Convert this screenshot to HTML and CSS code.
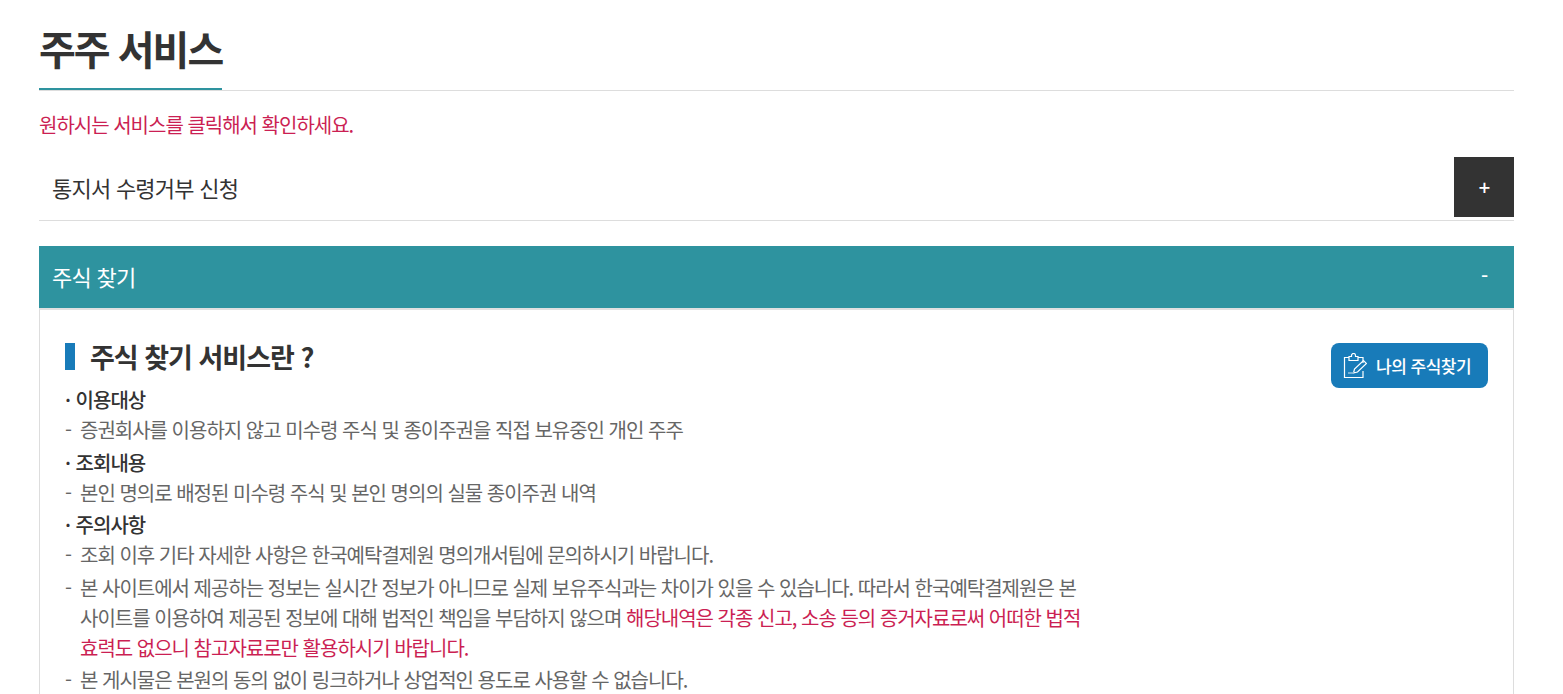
FILE: index.html
```html
<!DOCTYPE html>
<html lang="ko">
<head>
<meta charset="utf-8">
<title>주주 서비스</title>
<link rel="stylesheet" href="styles.css">
</head>
<body>
<main class="page">
  <header class="title-wrap"><h1 class="title">주주 서비스</h1></header>
  <p class="notice">원하시는 서비스를 클릭해서 확인하세요.</p>
  <section class="acc-closed">
    <h2 class="acc-closed-title">통지서 수령거부 신청</h2>
    <span class="acc-plus">+</span>
  </section>
  <section class="acc-open">
    <div class="acc-open-head"><h2 class="acc-open-title">주식 찾기</h2><span class="acc-minus">-</span></div>
    <div class="acc-body">
      <div class="content">
        <h3 class="sub-title">주식 찾기 서비스란 ?</h3>
        <p class="label">· 이용대상</p>
        <p class="item">증권회사를 이용하지 않고 미수령 주식 및 종이주권을 직접 보유중인 개인 주주</p>
        <p class="label">· 조회내용</p>
        <p class="item">본인 명의로 배정된 미수령 주식 및 본인 명의의 실물 종이주권 내역</p>
        <p class="label">· 주의사항</p>
        <p class="item">조회 이후 기타 자세한 사항은 한국예탁결제원 명의개서팀에 문의하시기 바랍니다.</p>
        <p class="item">본 사이트에서 제공하는 정보는 실시간 정보가 아니므로 실제 보유주식과는 차이가 있을 수 있습니다. 따라서 한국예탁결제원은 본 사이트를 이용하여 제공된 정보에 대해 법적인 책임을 부담하지 않으며 <span class="warn">해당내역은 각종 신고, 소송 등의 증거자료로써 어떠한 법적 효력도 없으니 참고자료로만 활용하시기 바랍니다.</span></p>
        <p class="item">본 게시물은 본원의 동의 없이 링크하거나 상업적인 용도로 사용할 수 없습니다.</p>
      </div>
      <a class="find-btn" href="#">
        <svg class="find-icon" viewBox="0 0 24 26" width="24" height="26" fill="none" stroke="#fff" stroke-width="1.2">
          <path d="M6 4.500H1.500V24.500H20V18"/>
          <path d="M15 4.500h5V10"/>
          <path d="M6 7.500V3.500h2.500V2.500a2 2 0 0 1 4 0V3.500H15v4z"/>
          <path d="M10.500 20l1-4L20.500 7.500l3 3-9 8.500z"/>
          <path d="M5 20h6" stroke="#8fbfdc" stroke-width="1.600"/>
        </svg>
        <span>나의 주식찾기</span>
      </a>
    </div>
  </section>
</main>
</body>
</html>
```

FILE: styles.css
```css
html, body { margin: 0; padding: 0; height: 694px; overflow: hidden; background: #fff; }
body { font-family: "Noto Sans CJK KR", "Noto Sans", sans-serif; color: #333; }
h1, h2, h3, p { margin: 0; }
.page { padding: 0 49px 0 39px; }
.title-wrap { border-bottom: 1px solid #ddd; height: 90px; display: flex; }
.title { font-size: 40px; line-height: 50px; padding-top: 23px; height: 90px; box-sizing: border-box; font-weight: 700; letter-spacing: -2px; color: #333; border-bottom: 2px solid #2e939f; margin-bottom: -1px; }
.notice { margin-top: 20px; font-size: 20px; line-height: 28px; letter-spacing: -1px; color: #cb1f53; }
.acc-closed { margin-top: 18px; height: 60px; border-bottom: 1px solid #ddd; display: flex; justify-content: space-between; padding-bottom: 3px; padding-left: 13px; }
.acc-closed-title { font-size: 22px; line-height: 60px; font-weight: 400; letter-spacing: -0.75px; color: #333; }
.acc-plus { width: 60px; height: 60px; padding-left: 1px; box-sizing: border-box; background: #333; color: #fff; font-size: 20px; font-weight: 500; line-height: 60px; text-align: center; }
.acc-open { margin-top: 25px; }
.acc-open-head { height: 62px; background: #2e939f; color: #fff; display: flex; justify-content: space-between; padding-left: 13px; border-bottom: 2px solid #e0e0e0; }
.acc-open-title { font-size: 22px; line-height: 60px; font-weight: 400; letter-spacing: -0.75px; }
.acc-minus { width: 60px; padding-left: 1px; box-sizing: border-box; text-align: center; font-size: 20px; font-weight: 500; line-height: 60px; }
.acc-body { border: 1px solid #ddd; border-top: 0; padding: 33px 25px 0 25px; display: flex; justify-content: space-between; align-items: flex-start; }
.content { width: 1020px; }
.sub-title { font-size: 27px; line-height: 27px; font-weight: 700; letter-spacing: -1px; color: #333; border-left: 10px solid #187bb9; padding-left: 15px; margin: 0 0 15px; height: 27px; display: flex; align-items: center; }
.label { font-size: 20px; line-height: 30px; font-weight: 500; letter-spacing: -1px; word-spacing: 1px; color: #333; }
.item { font-size: 20px; line-height: 30px; letter-spacing: -1px; color: #666; padding-left: 15px; position: relative; margin-bottom: 2.5px; word-break: keep-all; }
.item::before { content: "-"; position: absolute; left: 0; top: 0; }
.warn { color: #cb1f53; }
.find-btn { display: flex; align-items: center; gap: 9px; width: 157px; height: 45px; box-sizing: border-box; padding-left: 12px; background: #187bb9; border-radius: 8px; color: #fff; font-size: 17px; font-weight: 500; letter-spacing: -0.5px; text-decoration: none; flex-shrink: 0; }
.find-icon { flex-shrink: 0; }
```
